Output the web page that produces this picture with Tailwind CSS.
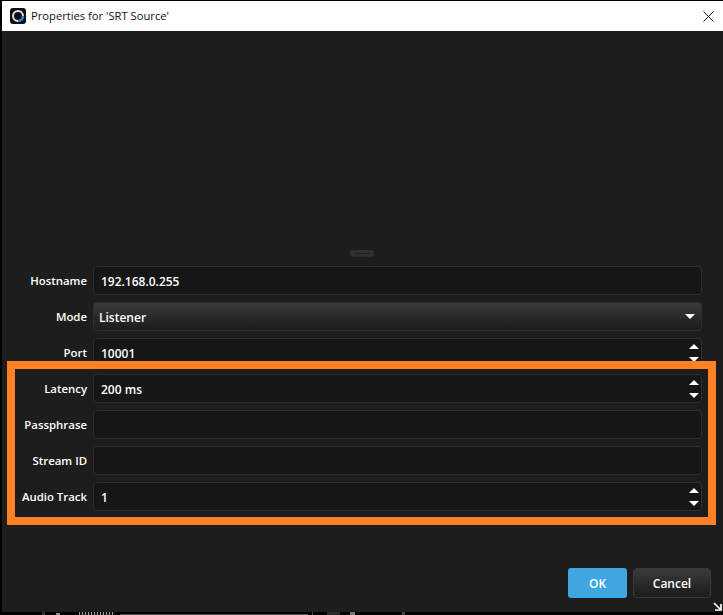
<!doctype html>
<html>
<head>
<script src="https://cdn.jsdelivr.net/npm/@tailwindcss/browser@4"></script>
</head>
<body class="bg-black">
<div class="relative w-[723px] h-[615px] overflow-hidden bg-black font-['Open_Sans','Noto_Sans',sans-serif]">
  <div class="mt-px ml-[2px] w-[721px] h-[611px] flex flex-col bg-[#1d1d1d]">
    <div class="h-[30px] shrink-0 bg-white flex items-center text-[#111] text-[11.2px]">
      <svg class="ml-[8px] w-[16px] h-[16px]" viewBox="0 0 16 16">
        <rect width="16" height="16" rx="3" fill="#0d0d0d"/>
        <circle cx="8" cy="8" r="5" fill="none" stroke="#cfe4f5" stroke-width="2"/>
        <path d="M8 13a5 5 0 0 0 5-5" fill="none" stroke="#2f7fc0" stroke-width="2.6"/>
      </svg>
      <span class="ml-[5px]">Properties for 'SRT Source'</span>
      <svg class="ml-auto mr-[9px] w-[11px] h-[11px]" viewBox="0 0 11 11"><path d="M.5.5l10 10M10.5.5l-10 10" stroke="#111" stroke-width="1" fill="none"/></svg>
    </div>
    <div class="h-[226px] shrink-0 flex items-end justify-center">
      <div class="w-[24px] h-[7px] rounded-[2px] bg-[#303030] border border-[#2c2c2c] mr-[1px] flex items-center justify-center"><div class="w-[16px] h-px bg-[#1f1f1f]"></div></div>
    </div>
    <div class="mt-[9px] ml-[4px] w-[696px] flex flex-col gap-[7px] text-white text-xs font-semibold">
      <div class="flex items-center h-[29px] gap-[6px]"><label class="w-[81px] pt-px text-right text-[11.4px]">Hostname</label><div class="flex-1 h-full rounded-[4px] border border-[#2e2e2e] bg-[#161616] pl-[7px] flex items-center"><span class="pt-[2px]">192.168.0.255</span></div></div>
      <div class="flex items-center h-[29px] gap-[6px]"><label class="w-[81px] pt-px text-right text-[11.4px]">Mode</label><div class="flex-1 h-full rounded-[4px] border border-[#2e2e2e] bg-gradient-to-b from-[#3a3a3a] to-[#1c1c1c] pl-[5px] pr-[6px] flex items-center justify-between"><span class="pt-[2px]">Listener</span><svg class="w-[10px] h-[5px]" viewBox="0 0 10 5"><path d="M0 0h10L5 5z" fill="#fff"/></svg></div></div>
      <div class="flex items-center h-[29px] gap-[6px]"><label class="w-[81px] pt-px text-right text-[11.4px]">Port</label><div class="flex-1 h-full rounded-[4px] border border-[#2e2e2e] bg-[#161616] pl-[7px] pr-[2px] flex items-center justify-between"><span class="pt-[2px]">10001</span><span class="flex flex-col gap-[8px]"><svg class="w-[10px] h-[5px]" viewBox="0 0 10 5"><path d="M0 5h10L5 0z" fill="#fff"/></svg><svg class="w-[10px] h-[5px]" viewBox="0 0 10 5"><path d="M0 0h10L5 5z" fill="#fff"/></svg></span></div></div>
      <div class="flex items-center h-[29px] gap-[6px]"><label class="w-[81px] pt-px text-right text-[11.4px]">Latency</label><div class="flex-1 h-full rounded-[4px] border border-[#2e2e2e] bg-[#161616] pl-[7px] pr-[2px] flex items-center justify-between"><span class="pt-[2px]">200 ms</span><span class="flex flex-col gap-[8px]"><svg class="w-[10px] h-[5px]" viewBox="0 0 10 5"><path d="M0 5h10L5 0z" fill="#fff"/></svg><svg class="w-[10px] h-[5px]" viewBox="0 0 10 5"><path d="M0 0h10L5 5z" fill="#fff"/></svg></span></div></div>
      <div class="flex items-center h-[29px] gap-[6px]"><label class="w-[81px] pt-px text-right text-[11.4px]">Passphrase</label><div class="flex-1 h-full rounded-[4px] border border-[#2e2e2e] bg-[#161616]"></div></div>
      <div class="flex items-center h-[29px] gap-[6px]"><label class="w-[81px] pt-px text-right text-[11.4px]">Stream ID</label><div class="flex-1 h-full rounded-[4px] border border-[#2e2e2e] bg-[#161616]"></div></div>
      <div class="flex items-center h-[29px] gap-[6px]"><label class="w-[81px] pt-px text-right text-[11.4px]">Audio Track</label><div class="flex-1 h-full rounded-[4px] border border-[#2e2e2e] bg-[#161616] pl-[7px] pr-[2px] flex items-center justify-between"><span class="pt-[2px]">1</span><span class="flex flex-col gap-[8px]"><svg class="w-[10px] h-[5px]" viewBox="0 0 10 5"><path d="M0 5h10L5 0z" fill="#fff"/></svg><svg class="w-[10px] h-[5px]" viewBox="0 0 10 5"><path d="M0 0h10L5 5z" fill="#fff"/></svg></span></div></div>
    </div>
    <div class="mt-[57px] flex justify-end gap-[6px] pr-[12px] text-white text-xs font-semibold">
      <button class="w-[59px] h-[30px] pt-[2px] rounded-[3px] bg-[#3ea6e0]">OK</button>
      <button class="w-[78px] h-[30px] pt-[2px] rounded-[4px] border border-[#3a3a3a] bg-gradient-to-b from-[#3a3a3a] to-[#1c1c1c]">Cancel</button>
    </div>
  </div>
  <div class="absolute left-[7px] top-[361px] w-[709px] h-[164px] border-[8px] border-[#ff8126]"></div>
  <svg class="absolute left-[713px] top-[602px] w-[9px] h-[9px]" viewBox="0 0 9 9"><path d="M1 1l6 6M8 2v6H2" stroke="#fff" stroke-width="1.7" fill="none"/></svg>
  <div class="absolute left-[42px] top-[612px] w-[3px] h-[3px] bg-[#333]"></div>
  <div class="absolute left-[56px] top-[613px] w-[4px] h-[2px] bg-[#888]"></div>
  <div class="absolute left-[79px] top-[612px] w-[36px] h-[3px] bg-[repeating-linear-gradient(90deg,#999_0_1px,#111_1px_3px)]"></div>
  <div class="absolute left-[120px] top-[614px] w-[188px] h-px bg-[#555]"></div>
  <div class="absolute left-[312px] top-[612px] w-px h-[3px] bg-[#444]"></div>
  <div class="absolute left-[327px] top-[612px] w-[13px] h-[3px] bg-[#2a2a2a]"></div>
  <div class="absolute left-[350px] top-[612px] w-[5px] h-[3px] bg-[#777]"></div>
  <div class="absolute left-[402px] top-[612px] w-[3px] h-[3px] bg-[#444]"></div>
</div>
</body>
</html>
